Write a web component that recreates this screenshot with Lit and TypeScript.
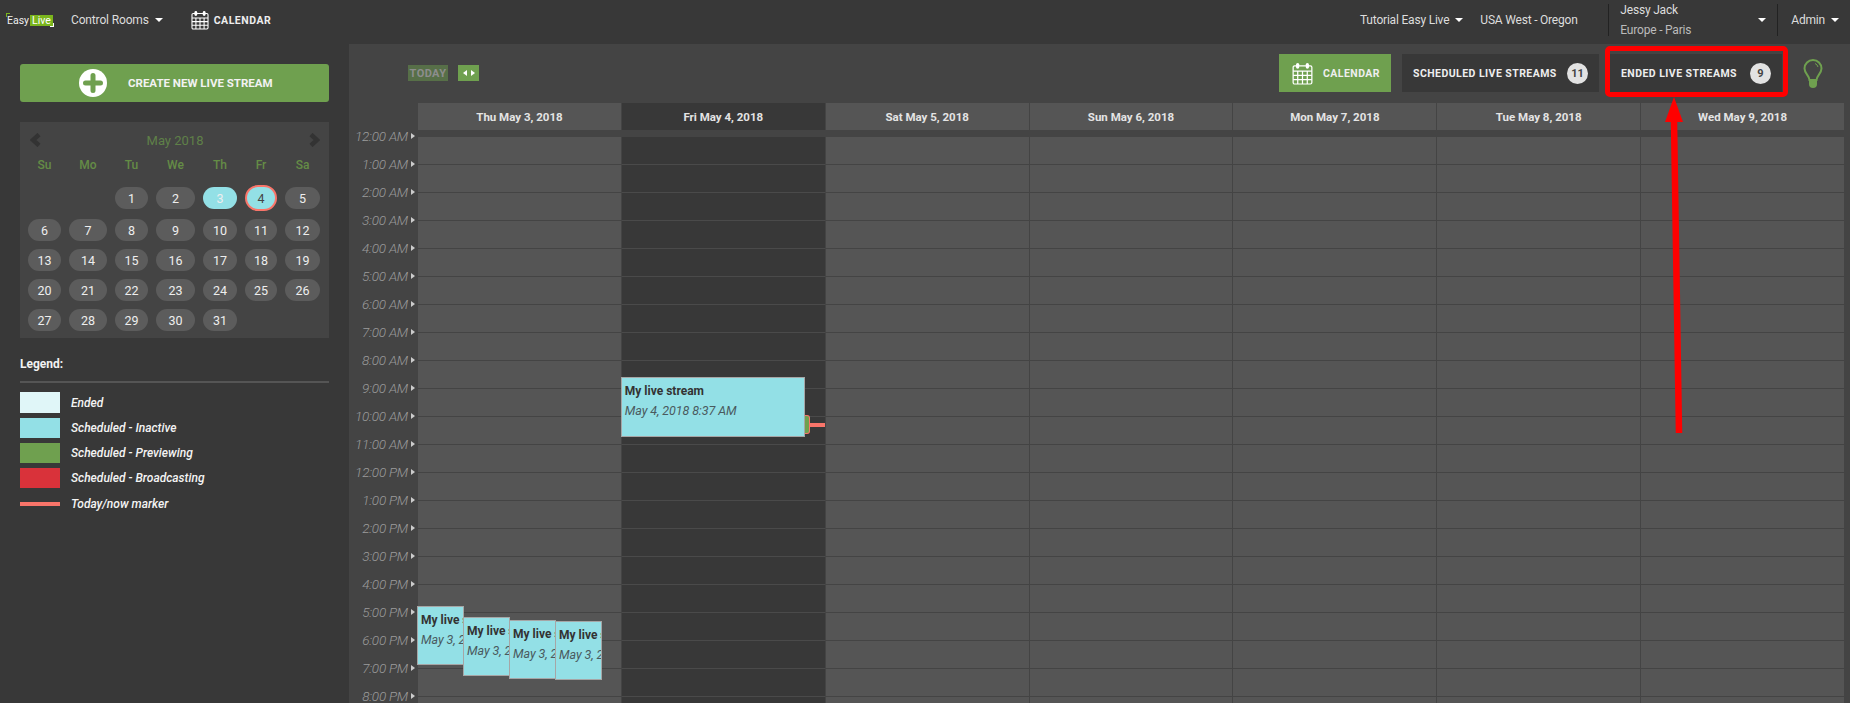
import { LitElement, html, css, svg } from "lit";
import { customElement } from "lit/decorators.js";

const calIcon = (w: number, h: number) => html`<svg class="cal" width=${w} height=${h} viewBox="0 0 22 24" fill="none" stroke="#fff" stroke-width="1.3">
  <rect x="1.2" y="4" width="19.6" height="19" rx="1.5" fill="none"/>
  <path d="M1.2 9.5h19.6M1.2 14h19.6M1.2 18.5h19.6M6 9.5V23M11 9.5V23M16 9.5V23"/>
  <rect x="4.2" y="1" width="3.4" height="6" rx="1.7" fill="#fff" stroke="none"/>
  <rect x="14.4" y="1" width="3.4" height="6" rx="1.7" fill="#fff" stroke="none"/>
</svg>`;

const HOURS = ["12:00 AM","1:00 AM","2:00 AM","3:00 AM","4:00 AM","5:00 AM","6:00 AM","7:00 AM","8:00 AM","9:00 AM","10:00 AM","11:00 AM","12:00 PM","1:00 PM","2:00 PM","3:00 PM","4:00 PM","5:00 PM","6:00 PM","7:00 PM","8:00 PM"];
const DAYS = ["Thu May 3, 2018","Fri May 4, 2018","Sat May 5, 2018","Sun May 6, 2018","Mon May 7, 2018","Tue May 8, 2018","Wed May 9, 2018"];
const WEEK = ["Su","Mo","Tu","We","Th","Fr","Sa"];
const LEGEND = [
  { label: "Ended", cls: "s-ended" },
  { label: "Scheduled - Inactive", cls: "s-inactive" },
  { label: "Scheduled - Previewing", cls: "s-preview" },
  { label: "Scheduled - Broadcasting", cls: "s-live" },
  { label: "Today/now marker", cls: "s-marker" },
];
const THU_EVENTS = [
  { l: -1, t: 469, h: 59 },
  { l: 45, t: 480, h: 59 },
  { l: 91, t: 483, h: 59 },
  { l: 137, t: 484, h: 59 },
];

@customElement("app-root")
export class AppRoot extends LitElement {
  static styles = css`
    :host { display: block; position: relative; width: 1850px; height: 703px; overflow: hidden; background: #383838; color: #fff;
      font-family: Roboto, "Liberation Sans", sans-serif; font-size: 12px; }
    .top { height: 40px; display: flex; align-items: center; color: #ddd; }
    .logo { margin-left: 7px; width: 46px; height: 12px; position: relative; display: flex; align-items: center; font-size: 10.5px; color: #eee; }
    .logo b { font-weight: 400; background: #7ab51d; color: #fff; padding: 0 2px; margin-left: 1px; line-height: 11px; height: 11px; }
    .logo::before { content: ""; position: absolute; left: -1px; top: -1px; width: 3px; height: 3px; border-left: 1px solid #7ab51d; border-top: 1px solid #7ab51d; }
    .logo::after { content: ""; position: absolute; right: -1px; bottom: -1px; width: 3px; height: 3px; border-right: 1px solid #fff; border-bottom: 1px solid #fff; }
    .caret { display: inline-block; width: 0; height: 0; border-left: 4px solid transparent; border-right: 4px solid transparent; border-top: 4px solid #fff; flex: none; }
    .rooms { margin-left: 18px; display: flex; align-items: center; gap: 6px; letter-spacing: -.15px; }
    .top-cal { margin-left: 28px; display: flex; align-items: center; gap: 5px; font-weight: 700; font-size: 10.5px; letter-spacing: .5px; color: #eee; }
    .cal { display: block; flex: none; }
    .top-right { margin-left: auto; display: flex; align-items: center; height: 40px; letter-spacing: -.2px; }
    .tut { display: flex; align-items: center; gap: 6px; }
    .region { margin-left: 17px; width: 128px; }
    .user { width: 170px; height: 32px; border-left: 1px solid #222; border-right: 1px solid #222; padding: 0 11px; box-sizing: border-box; display: flex; align-items: center; justify-content: space-between; }
    .user-names { display: flex; flex-direction: column; gap: 6px; line-height: 14px; }
    .user-names span + span { color: #bbb; }
    .admin { display: flex; align-items: center; gap: 6px; margin: 0 11px 0 13px; }

    .main { display: flex; height: 659px; margin-top: 4px; }
    .side { width: 349px; flex: none; padding: 20px 20px 0; box-sizing: border-box; }
    .create { height: 38px; width: 309px; background: #6fa04f; border-radius: 3px; display: flex; align-items: center; padding-left: 59px; box-sizing: border-box; gap: 21px;
      font-weight: 700; font-size: 11.5px; color: #f2f2f2; }
    .mini { margin-top: 20px; width: 309px; height: 216px; background: #444; padding: 0 8px; box-sizing: border-box; }
    .mini-head { height: 36px; display: flex; align-items: center; justify-content: space-between; color: #5f8048; font-size: 13px; padding: 0 1px 0 2px; }
    .mini-row { display: grid; grid-template-columns: 33px 38px 33px 39px 34px 32px 35px; column-gap: 8px; justify-items: center; }
    .week { height: 14px; align-items: center; color: #648c46; font-weight: 500; }
    .dates { row-gap: 8px; margin-top: 15px; }
    .pill { width: 100%; height: 22px; border-radius: 11px; background: #5c5c5c; color: #eee; font-size: 12.5px; display: flex; align-items: center; justify-content: center; box-sizing: border-box; }
    .pill.cur { background: #93e0e6; }
    .pill.today { background: #93e0e6; color: #444; border: 2px solid #f9756a; height: 26px; margin-top: -2px; border-radius: 13px; }
    .legend-title { margin-top: 18px; font-weight: 700; font-size: 12px; line-height: 16px; color: #f2f2f2; }
    .legend-rule { height: 2px; background: #555; margin-top: 9px; }
    .legend-list { margin-top: 9px; display: flex; flex-direction: column; gap: 5px; }
    .legend-item { display: flex; align-items: center; gap: 11px; height: 20px; font-style: italic; font-weight: 500; font-size: 12px; color: #f4f4f4; }
    .legend-item:first-child { height: 21px; }
    .legend-item:first-child .swatch { height: 21px; }
    .legend-item:last-child { margin-top: 1px; }
    .swatch { width: 40px; height: 20px; flex: none; }
    .s-ended { background: #e0f6f8; }
    .s-inactive { background: #93e0e6; }
    .s-preview { background: #6fa04f; }
    .s-live { background: #d9323a; }
    .swatch.s-marker { height: 4px; background: #f9756a; }

    .panel { flex: 1; background: #444; padding: 10px 6px 0 0; min-width: 0; }
    .toolbar { height: 38px; display: flex; align-items: center; padding-left: 59px; padding-right: 21px; }
    .today-btn { width: 40px; height: 16px; background: #576f48; color: #8d8d8d; font-size: 11px; font-weight: 700; letter-spacing: .4px; display: flex; align-items: center; justify-content: center; }
    .nav-btn { width: 21px; height: 16px; margin-left: 10px; background: #6fa04f; display: flex; align-items: center; justify-content: center; gap: 4px; }
    .tri-l, .tri-r { width: 0; height: 0; border-top: 3.5px solid transparent; border-bottom: 3.5px solid transparent; }
    .tri-l { border-right: 4px solid #fff; }
    .tri-r { border-left: 4px solid #fff; }
    .views { margin-left: auto; display: flex; align-items: center; }
    .view { height: 38px; display: flex; align-items: center; box-sizing: border-box; font-weight: 700; font-size: 10.5px; letter-spacing: .45px; background: #383838; color: #eee; white-space: nowrap; }
    .v-cal { width: 112px; background: #6fa04f; padding-left: 13px; gap: 10px; }
    .v-sch { width: 197px; margin-left: 11px; padding-left: 11px; }
    .v-end { width: 172px; margin-left: 11px; padding-left: 11px; }
    .badge { margin-left: auto; margin-right: 11px; width: 21px; height: 21px; border-radius: 50%; background: #e2e2e2; color: #444; font-size: 11px; display: flex; align-items: center; justify-content: center; letter-spacing: 0; }
    .bulb { margin-left: 21px; display: block; }
    .head-row { margin: 11px 0 0 69px; display: grid; grid-template-columns: repeat(7, 1fr); column-gap: 1px; }
    .head { height: 27px; background: #555; display: flex; align-items: center; justify-content: center; font-weight: 700; font-size: 11.5px; color: #e4e4e4; }
    .head.on { background: #383838; }
    .body { margin-top: 7px; display: flex; height: 600px; }
    .times { width: 69px; flex: none; margin-top: -15px; }
    .time { height: 28px; display: flex; align-items: center; justify-content: flex-end; gap: 3px; padding-right: 3px; box-sizing: border-box; font-style: italic; font-weight: 300; font-size: 13.5px; color: #9c9c9c; letter-spacing: -.2px; }
    .time i { width: 0; height: 0; border-top: 3.5px solid transparent; border-bottom: 3.5px solid transparent; border-left: 4.5px solid #ccc; }
    .cols { flex: 1; display: grid; grid-template-columns: repeat(7, 1fr); column-gap: 1px; }
    .col { position: relative; background: repeating-linear-gradient(to bottom, #555 0, #555 27px, #444 27px, #444 28px); }
    .col.on { background: repeating-linear-gradient(to bottom, #383838 0, #383838 27px, #4a4a4a 27px, #4a4a4a 28px); }
    .event { position: absolute; box-sizing: border-box; background: #93e0e6; border: 1px solid #a6a6a6; color: #333; overflow: hidden; padding: 5px 0 0 3px; white-space: nowrap; }
    .ev-title { font-weight: 700; font-size: 12px; line-height: 16px; }
    .ev-date { margin-top: 3px; font-style: italic; font-size: 12.5px; line-height: 18px; color: #4a5a5e; letter-spacing: -.1px; }
    .now-tick { position: absolute; left: 182px; top: 278px; width: 6px; height: 19px; box-sizing: border-box; background: #6fa04f; border: 1.5px solid #f9756a; border-left: 0; border-radius: 0 3px 3px 0; }
    .now-line { position: absolute; left: 188px; top: 286px; right: 0; height: 4px; background: #f9756a; }
    .hl { position: absolute; left: 1605px; top: 46px; width: 183px; height: 51px; box-sizing: border-box; border: 5px solid #f00; border-radius: 5px; }
    .arrow { position: absolute; left: 1660px; top: 95px; display: block; }
  `;

  private pills() {
    const cells: unknown[] = [html`<span></span>`, html`<span></span>`];
    for (let d = 1; d <= 31; d++) {
      const cls = d === 3 ? "pill cur" : d === 4 ? "pill today" : "pill";
      cells.push(html`<span class=${cls}>${d}</span>`);
    }
    return cells;
  }

  render() {
    return html`
      <div class="top">
        <div class="logo">Easy<b>Live</b></div>
        <div class="rooms">Control Rooms <span class="caret"></span></div>
        <div class="top-cal">${calIcon(18, 20)} CALENDAR</div>
        <div class="top-right">
          <div class="tut">Tutorial Easy Live <span class="caret"></span></div>
          <div class="region">USA West - Oregon</div>
          <div class="user">
            <div class="user-names"><span>Jessy Jack</span><span>Europe - Paris</span></div>
            <span class="caret"></span>
          </div>
          <div class="admin">Admin <span class="caret"></span></div>
        </div>
      </div>
      <div class="main">
        <aside class="side">
          <div class="create">
            <svg width="28" height="28" viewBox="0 0 28 28"><circle cx="14" cy="14" r="14" fill="#fff"/><path d="M14 6.5v15M6.5 14h15" stroke="#6fa04f" stroke-width="5" stroke-linecap="round"/></svg>
            CREATE NEW LIVE STREAM
          </div>
          <div class="mini">
            <div class="mini-head">
              <svg width="11" height="14" viewBox="0 0 11 14"><path d="M9 1.5 3 7l6 5.5" fill="none" stroke="#333" stroke-width="4.5"/></svg>
              <span>May 2018</span>
              <svg width="11" height="14" viewBox="0 0 11 14"><path d="M2 1.5 8 7l-6 5.5" fill="none" stroke="#333" stroke-width="4.5"/></svg>
            </div>
            <div class="mini-row week">${WEEK.map((w) => html`<span>${w}</span>`)}</div>
            <div class="mini-row dates">${this.pills()}</div>
          </div>
          <div class="legend-title">Legend:</div>
          <div class="legend-rule"></div>
          <div class="legend-list">
            ${LEGEND.map((l) => html`<div class="legend-item"><span class="swatch ${l.cls}"></span>${l.label}</div>`)}
          </div>
        </aside>
        <section class="panel">
          <div class="toolbar">
            <div class="today-btn">TODAY</div>
            <div class="nav-btn"><span class="tri-l"></span><span class="tri-r"></span></div>
            <div class="views">
              <div class="view v-cal">${calIcon(21, 23)} CALENDAR</div>
              <div class="view v-sch">SCHEDULED LIVE STREAMS <span class="badge">11</span></div>
              <div class="view v-end">ENDED LIVE STREAMS <span class="badge">9</span></div>
            </div>
            <svg class="bulb" width="20" height="29" viewBox="0 0 20 29">
              <path d="M6.5 21c0-4-5-6.500-5-11.500a8.500 8.500 0 0 1 17 0c0 5-5 7.500-5 11.500z" fill="none" stroke="#6fa04f" stroke-width="2"/>
              <path d="M6 20.500h8v4.500a4 4 0 0 1-8 0z" fill="#6fa04f"/>
              <path d="M12 4.500a5 5 0 0 1 3 3.500" fill="none" stroke="#6fa04f" stroke-width="1"/>
            </svg>
          </div>
          <div class="head-row">
            ${DAYS.map((d, i) => html`<div class="head ${i === 1 ? "on" : ""}">${d}</div>`)}
          </div>
          <div class="body">
            <div class="times">${HOURS.map((h) => html`<div class="time">${h}<i></i></div>`)}</div>
            <div class="cols">
              ${DAYS.map((_, i) => html`<div class="col ${i === 1 ? "on" : ""}">
                ${i === 0 ? THU_EVENTS.map((e) => html`<div class="event" style="left:${e.l}px;top:${e.t}px;width:47px;height:${e.h}px">
                    <div class="ev-title">My live s</div><div class="ev-date">May 3, 2</div></div>`) : ""}
                ${i === 1 ? html`
                  <div class="now-tick"></div><div class="now-line"></div>
                  <div class="event" style="left:-1px;top:240px;width:184px;height:60px">
                    <div class="ev-title">My live stream</div><div class="ev-date">May 4, 2018 8:37 AM</div>
                  </div>` : ""}
              </div>`)}
            </div>
          </div>
        </section>
      </div>
      <div class="hl"></div>
      <svg class="arrow" width="30" height="340" viewBox="0 0 30 340">
        ${svg`<path d="M14 26 L19 338" stroke="#f00" stroke-width="6.500" fill="none"/><path d="M14 2 L23 27 L5 27 Z" fill="#f00"/>`}
      </svg>
    `;
  }
}
